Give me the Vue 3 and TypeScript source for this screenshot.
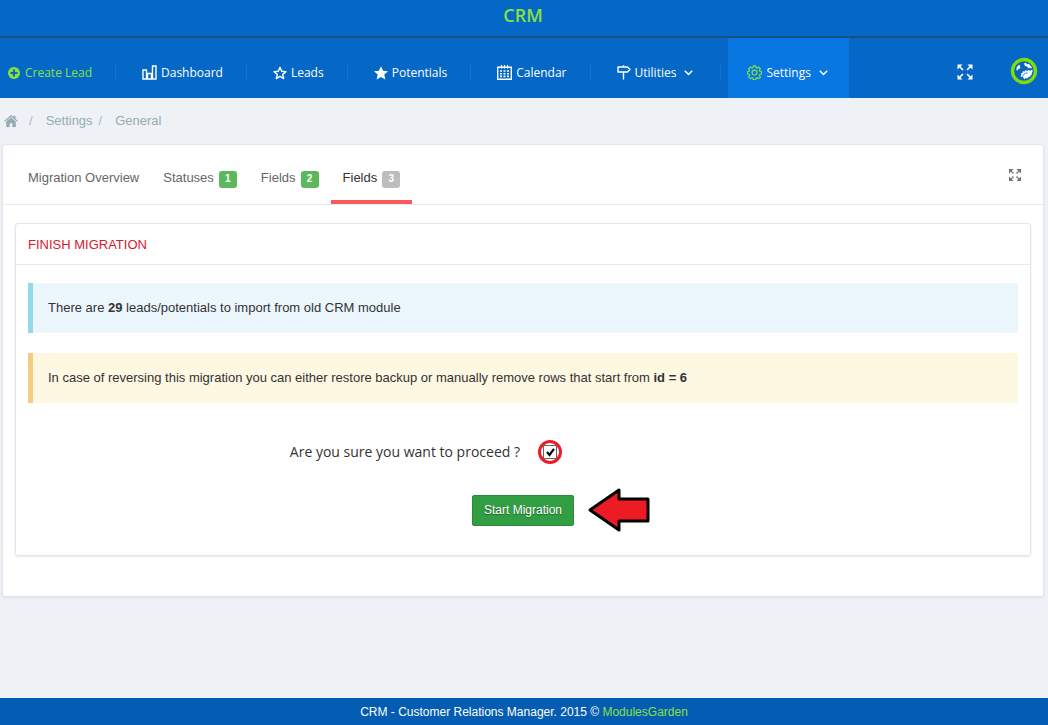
<script setup lang="ts">
import { ref } from 'vue'

interface NavItem {
  label: string
  icon: string
  menu?: boolean
  active?: boolean
  accent?: boolean
}

interface Tab {
  label: string
  count?: number
  active?: boolean
}

const navItems: NavItem[] = [
  { label: 'Create Lead', icon: 'plus', accent: true },
  { label: 'Dashboard', icon: 'bars' },
  { label: 'Leads', icon: 'star-outline' },
  { label: 'Potentials', icon: 'star' },
  { label: 'Calendar', icon: 'calendar' },
  { label: 'Utilities', icon: 'sign', menu: true },
  { label: 'Settings', icon: 'gear', menu: true, active: true },
]

const tabs: Tab[] = [
  { label: 'Migration Overview' },
  { label: 'Statuses', count: 1 },
  { label: 'Fields', count: 2 },
  { label: 'Fields', count: 3, active: true },
]

const confirmed = ref<boolean>(true)
</script>

<template>
  <div class="page">
    <header class="header">
      <h1 class="brand">CRM</h1>
      <div class="bar">
        <nav class="nav">
          <a
            v-for="item in navItems"
            :key="item.label"
            href="#"
            class="nav-item"
            :class="{ accent: item.accent, active: item.active, menu: item.menu }"
          >
            <svg v-if="item.icon === 'plus'" viewBox="0 0 12 12" width="12" height="12">
              <circle cx="6" cy="6" r="6" fill="currentColor" />
              <path d="M6 2.500v7M2.500 6h7" stroke="#0568c6" stroke-width="2" />
            </svg>
            <svg v-else-if="item.icon === 'bars'" viewBox="0 0 15 15" width="15" height="15" fill="none" stroke="currentColor" stroke-width="1.400">
              <path d="M1 5h3.500v9H1zM5.500 8.500h4V14h-4zM10.500 1H14v13h-3.500z" />
            </svg>
            <svg v-else-if="item.icon === 'star-outline'" viewBox="0 0 14 14" width="14" height="14" fill="none" stroke="currentColor" stroke-width="1.400" stroke-linejoin="round">
              <path d="M7 1.300l1.700 3.900 4.200.4-3.200 2.800 1 4.200L7 10.400l-3.700 2.200 1-4.200L1.100 5.600l4.200-.4z" />
            </svg>
            <svg v-else-if="item.icon === 'star'" viewBox="0 0 14 14" width="14" height="14" fill="currentColor">
              <path d="M7 .2l2.100 4.600 4.900.5-3.700 3.300 1.100 5L7 11l-4.400 2.600 1.100-5L0 5.300l4.900-.5z" />
            </svg>
            <svg v-else-if="item.icon === 'calendar'" viewBox="0 0 15 15" width="15" height="15" fill="none" stroke="currentColor">
              <path d="M.7 2.200h13.600v12H.7z" stroke-width="1.400" />
              <path d="M4.500 0v3.500M7.500 0v3.500M10.500 0v3.500" stroke-width="1.200" />
              <path d="M3 6h2M6.500 6h2M10 6h2M3 8.700h2M6.500 8.700h2M10 8.700h2M3 11.400h2M6.500 11.400h2M10 11.400h2" stroke-width="1.600" />
            </svg>
            <svg v-else-if="item.icon === 'sign'" viewBox="0 0 14 15" width="14" height="15" fill="none" stroke="currentColor" stroke-width="1.400" stroke-linejoin="round">
              <path d="M1 2h9.500L13 4.500 10.500 7H1zM6.500 .3V2M6.500 7v7.500" />
            </svg>
            <svg v-else viewBox="0 0 16 16" width="15" height="15" fill="none" stroke="currentColor" stroke-width="1.200" stroke-linejoin="round">
              <path d="M6.700.9h2.600l.4 1.900 1.100.5 1.700-1.100 1.800 1.900-1.100 1.600.5 1.100 1.900.4v2.400l-1.900.4-.5 1.200 1.100 1.600-1.800 1.800-1.700-1.100-1.100.5-.4 1.900H6.700l-.4-1.900-1.100-.5-1.600 1.100-1.900-1.800 1.100-1.600-.5-1.200-1.900-.4V7.200l1.900-.4.5-1.100-1.100-1.600 1.900-1.900 1.600 1.100 1.100-.5z" />
              <circle cx="8" cy="8" r="2.600" />
            </svg>
            <span>{{ item.label }}</span>
            <svg v-if="item.menu" class="chevron" viewBox="0 0 9 6" width="9" height="6" fill="none" stroke="currentColor" stroke-width="1.500">
              <path d="M.8.8L4.500 4.500 8.200.8" />
            </svg>
          </a>
        </nav>
        <div class="tools">
          <button type="button" class="tool" aria-label="Full screen">
            <svg viewBox="0 0 16 16" width="16" height="16" fill="currentColor" stroke="currentColor">
              <path d="M.5.500h5L.5 5.500zM15.500.500v5L10.500 .500zM.5 15.500v-5l5 5zM15.500 15.500h-5l5-5z" stroke="none" />
              <path d="M1.500 1.500L6 6M14.500 1.500L10 6M1.500 14.500L6 10M14.500 14.500L10 10" stroke-width="1.700" />
            </svg>
          </button>
          <a href="#" class="avatar" aria-label="Profile">
            <svg viewBox="0 0 28 28" width="28" height="28">
              <circle cx="14" cy="14" r="11.500" fill="#0867bd" stroke="#7fdc06" stroke-width="3.400" />
              <path d="M6.300 13l.5-3 2.500-2.500.7 2 .2 2-2 .5-.6 1.500zM14 6.500l2-.8 1 1.800 1.500-.8L21.500 9.500l.2 2-2-.7-1 .7-1.700-2-2-.5z" fill="#fff" />
              <path d="M10.500 19.500l1-1.700-.7-1.300 1.700-.5.3-1.800 1.900.4 1-1.600 1.700 1 1.600-1.300 1 1.400 2.300-1.600.3 2-1 1.500.5 1.500-1.500.5-.4 1.800-1.800.1-1 1.700-1.700-.5-1.500 1.100-.8-1.600z" fill="#fff" />
              <path d="M12.500 20.500a4.500 4.500 0 0 1 5-4.500" fill="none" stroke="#0867bd" stroke-width=".8" />
            </svg>
          </a>
        </div>
      </div>
    </header>

    <nav class="crumbs" aria-label="Breadcrumb">
      <a href="#" aria-label="Home">
        <svg viewBox="0 0 14 12" width="14" height="12" fill="currentColor">
          <path d="M7 2.400l4.800 4.200V12H8.300V8.300H5.700V12H2.200V6.600z" />
          <path d="M7 0l2.500 2.100V.700h2v3L14 5.900l-.8.900L7 1.700.8 6.800 0 5.900z" />
        </svg>
      </a>
      <span class="slash">/</span>
      <a href="#">Settings</a>
      <span class="slash tight">/</span>
      <a href="#">General</a>
    </nav>

    <main class="card">
      <div class="card-head">
        <nav class="tabs">
          <a v-for="(tab, i) in tabs" :key="i" href="#" class="tab" :class="{ current: tab.active }">
            <span>{{ tab.label }}</span>
            <span v-if="tab.count" class="badge">{{ tab.count }}</span>
          </a>
        </nav>
        <button type="button" class="expand" aria-label="Expand panel">
          <svg viewBox="0 0 16 16" width="12" height="12" fill="currentColor" stroke="currentColor">
            <path d="M0 0h6L0 6zM16 0v6L10 0zM0 16v-6l6 6zM16 16h-6l6-6z" stroke="none" />
            <path d="M1.500 1.500L6 6M14.500 1.500L10 6M1.500 14.500L6 10M14.500 14.500L10 10" stroke-width="1.800" />
          </svg>
        </button>
      </div>

      <section class="panel">
        <h2 class="panel-title">FINISH MIGRATION</h2>
        <div class="panel-body">
          <p class="note info">There are <b>29</b> leads/potentials to import from old CRM module</p>
          <p class="note warn">
            In case of reversing this migration you can either restore backup or manually remove rows that start from
            <b>id = 6</b>
          </p>
          <form @submit.prevent>
            <div class="confirm">
              <label for="proceed">Are you sure you want to proceed ?</label>
              <span class="check-ring">
                <input id="proceed" v-model="confirmed" type="checkbox" />
                <svg v-if="confirmed" class="tick" viewBox="0 0 13 13" width="13" height="13" fill="none" stroke="#000" stroke-width="2.200">
                  <path d="M3 6l2.500 3L10 2.800" />
                </svg>
              </span>
            </div>
            <div class="submit">
              <span></span>
              <button type="submit" class="start">Start Migration</button>
              <svg viewBox="0 0 62 44" width="62" height="44">
                <path d="M2 22L31 2v9h29v22H31v9z" fill="#ed1c24" stroke="#000" stroke-width="3" stroke-linejoin="round" />
              </svg>
            </div>
          </form>
        </div>
      </section>
    </main>

    <footer class="footer">CRM - Customer Relations Manager. 2015 © <a href="#">ModulesGarden</a></footer>
  </div>
</template>

<style>
body {
  margin: 0;
}
</style>

<style scoped>
.page {
  min-height: 100vh;
  display: flex;
  flex-direction: column;
  background: #eef2f7;
  color: #333;
  font: 13px/18px "Liberation Sans", Arial, sans-serif;
}

.page,
.page * {
  box-sizing: border-box;
}

a {
  color: inherit;
  text-decoration: none;
}

button {
  border: 0;
  background: none;
  padding: 0;
  color: inherit;
  font: inherit;
}

svg {
  display: block;
  flex: none;
}

.header {
  background: #0568c6;
  color: #fff;
  font-family: "Open Sans", sans-serif;
}

.brand {
  margin: 0;
  height: 38px;
  padding-right: 2px;
  border-bottom: 2px solid #195083;
  color: #8be040;
  font-size: 18px;
  font-weight: 600;
  line-height: 30px;
  text-align: center;
}

.bar {
  display: flex;
  justify-content: space-between;
  height: 60px;
}

.nav {
  display: flex;
}

.nav-item {
  position: relative;
  display: flex;
  align-items: center;
  gap: 4px;
  padding: 9px 24px 0 26px;
  font-size: 12px;
  white-space: nowrap;
}

.nav-item::after {
  content: "";
  position: absolute;
  right: 0;
  top: 25px;
  width: 1px;
  height: 18px;
  background: #0b75df;
}

.nav-item.accent {
  gap: 5px;
  padding-left: 8px;
  color: #8be040;
}

.nav-item .chevron {
  margin-left: 4px;
}

.nav-item.menu {
  padding-right: 28px;
}

.nav-item.active {
  margin-left: 7px;
  padding-right: 21px;
  padding-left: 19px;
  background: #0877e2;
}

.nav-item.active::after {
  display: none;
}

.nav-item.active > svg:first-child {
  color: #8be040;
}

.tools {
  display: flex;
  align-items: center;
  gap: 37px;
  padding: 5px 10px 0 0;
}

.tool {
  padding-top: 3px;
}

.crumbs {
  display: flex;
  align-items: center;
  height: 46px;
  padding: 0 4px;
  color: #96abb1;
}

.slash {
  margin: 0 13px 0 11px;
  color: #a9b8bd;
}

.slash.tight {
  margin-left: 6px;
}

.card {
  margin: 0 4px 0 2px;
  padding-bottom: 40px;
  border: 1px solid #e1e6ea;
  border-radius: 3px;
  background: #fff;
  box-shadow: 0 1px 2px #dce1e5;
}

.card-head {
  display: flex;
  justify-content: space-between;
  height: 60px;
  border-bottom: 1px solid #e8ebec;
}

.tabs {
  display: flex;
  padding-left: 13px;
}

.tab {
  display: flex;
  align-items: center;
  gap: 5px;
  padding: 10px 12px 0;
  border-bottom: 4px solid transparent;
  color: #666;
}

.tab.current {
  border-color: #f9585e;
  color: #333;
}

.badge {
  width: 18px;
  height: 17px;
  margin-top: 4px;
  border-radius: 3px;
  background: #5cb85c;
  color: #fff;
  font-size: 10px;
  font-weight: 700;
  line-height: 16px;
  text-align: center;
}

.current .badge {
  background: #bdbdbd;
}

.expand {
  margin-right: 22px;
  color: #707578;
}

.panel {
  margin: 18px 12px 0;
  border: 1px solid #e1e6e9;
  border-radius: 3px;
  box-shadow: 0 1px 2px #e6e8ea;
}

.panel-title {
  margin: 0;
  padding: 12px 12px 10px;
  border-bottom: 1px solid #e8ebec;
  color: #d9182b;
  font-size: 13px;
  font-weight: 400;
  line-height: 18px;
}

.panel-body {
  padding: 18px 12px 23px;
}

.note {
  margin: 0 0 20px;
  padding: 16px 15px;
  border-left: 5px solid;
  border-radius: 0 3px 3px 0;
}

.info {
  border-color: #90dbe8;
  background: #ecf6fd;
}

.warn {
  margin-bottom: 37px;
  border-color: #f2cd82;
  background: #fef7e2;
}

.confirm {
  display: grid;
  grid-template-columns: 1fr 1fr;
  align-items: center;
  padding-right: 6px;
  font: 14px/24px "Open Sans", sans-serif;
}

.confirm label {
  text-align: right;
}

.check-ring {
  position: relative;
  display: grid;
  place-items: center;
  width: 24px;
  height: 24px;
  margin-left: 18px;
  border: 3px solid #ed1c24;
  border-radius: 50%;
}

.check-ring input {
  appearance: none;
  width: 14px;
  height: 14px;
  margin: 0;
  border: 1px solid #666;
  background: #fff;
}

.tick {
  position: absolute;
  inset: 0;
  margin: auto;
  pointer-events: none;
}

.submit {
  display: grid;
  grid-template-columns: 1fr auto 1fr;
  align-items: center;
  column-gap: 14px;
  margin-top: 24px;
}

.start {
  padding: 6px 11px;
  border: 1px solid #2a8a38;
  border-radius: 2px;
  background: #329e43;
  color: #fff;
  font-size: 12px;
  line-height: 17px;
  text-shadow: 0 1px 1px #1f5f29;
}

.footer {
  margin-top: auto;
  padding: 5px 0 4px;
  background: #045db2;
  color: #fff;
  font-size: 12px;
  text-align: center;
}

.footer a {
  color: #8be040;
}
</style>
